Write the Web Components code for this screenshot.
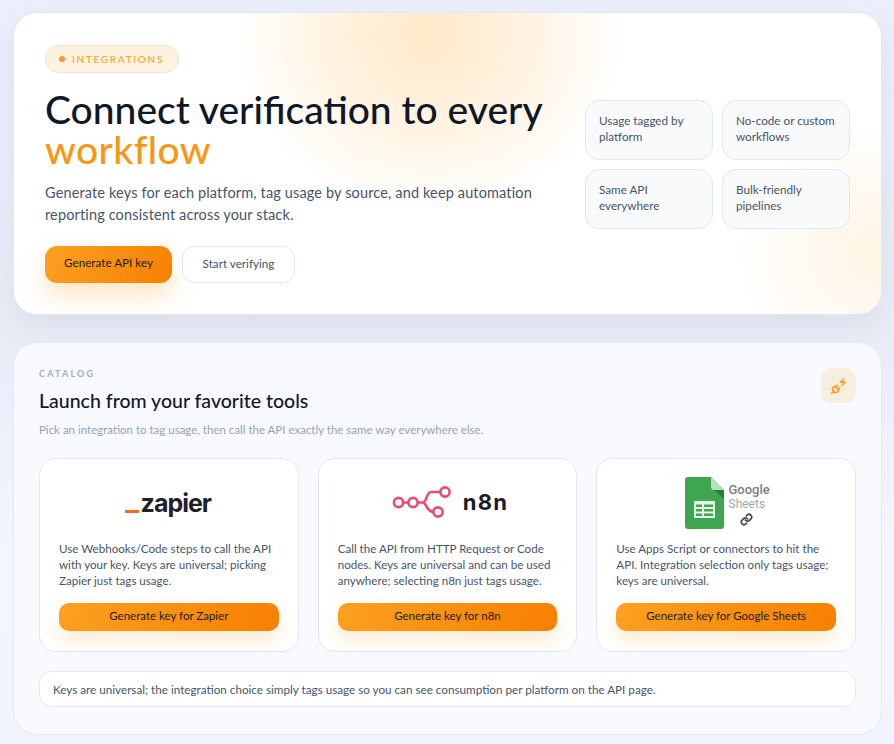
<!DOCTYPE html>
<html>
<head>
<meta charset="utf-8">
<title>Integrations</title>
<style>
    html, body { margin: 0; padding: 0; }
    body {
        width: 894px;
        height: 744px;
        overflow: hidden;
        font-family: "Lato", "Noto Sans", sans-serif;
        color: #0f172a;
        background: linear-gradient(180deg, #eaeffb 0%, #e8ecf7 45%, #f3f6fe 75%, #f1f4fe 100%);
    }
    main {
        display: flex;
        flex-direction: column;
        gap: 27px;
        padding: 12px 12px 0 13px;
    }
</style>
</head>
<body>
<main>
    <int-hero>
        <int-chip slot="chips">Usage tagged by platform</int-chip>
        <int-chip slot="chips">No-code or custom workflows</int-chip>
        <int-chip slot="chips">Same API everywhere</int-chip>
        <int-chip slot="chips">Bulk-friendly pipelines</int-chip>
    </int-hero>
    <int-catalog>
        <tool-card label="Generate key for Zapier">
            <zapier-logo slot="logo"></zapier-logo>
            Use Webhooks/Code steps to call the API with your key. Keys are universal; picking Zapier just tags usage.
        </tool-card>
        <tool-card label="Generate key for n8n">
            <n8n-logo slot="logo"></n8n-logo>
            Call the API from HTTP Request or Code nodes. Keys are universal and can be used anywhere; selecting n8n just tags usage.
        </tool-card>
        <tool-card label="Generate key for Google Sheets">
            <sheets-logo slot="logo"></sheets-logo>
            Use Apps Script or connectors to hit the API. Integration selection only tags usage; keys are universal.
        </tool-card>
    </int-catalog>
</main>

<script>
class IntHero extends HTMLElement {
    constructor() {
        super();
        this.attachShadow({ mode: 'open' });
        this.shadowRoot.innerHTML = `
            <style>
                :host {
                    display: grid;
                    grid-template-columns: 1fr 265px;
                    column-gap: 24px;
                    align-items: center;
                    height: 303px;
                    box-sizing: border-box;
                    padding: 32px 31px;
                    background:
                        radial-gradient(ellipse 195px 180px at 415px 20px, rgba(255, 200, 120, .4), rgba(255, 200, 120, .2) 55%, rgba(255, 200, 120, 0) 100%),
                        radial-gradient(ellipse 150px 130px at 869px 240px, rgba(255, 205, 130, .22), rgba(255, 205, 130, 0) 100%),
                        #fff;
                    border: 1px solid #e2e8f0;
                    border-radius: 24px;
                    box-shadow: 0 12px 32px rgba(15, 23, 42, .06);
                }
                .pill {
                    display: inline-flex;
                    align-items: center;
                    gap: 7px;
                    height: 28px;
                    box-sizing: border-box;
                    padding: 0 14px 0 13px;
                    background: #fdf1e0;
                    border: 1px solid #f1e4d2;
                    border-radius: 14px;
                    color: #fba42c;
                    font-size: 10px;
                    font-weight: 500;
                    letter-spacing: 1.7px;
                }
                .dot {
                    width: 6px;
                    height: 6px;
                    border-radius: 50%;
                    background: #fb9a1c;
                }
                h1 {
                    margin: 16px 0 0;
                    font-size: 39px;
                    line-height: 40px;
                    font-weight: 500;
                    color: #0f172a;
                }
                h1 span { color: #fb9612; display: block; letter-spacing: .4px; }
                p {
                    margin: 13px 0 0;
                    font-size: 14.5px;
                    line-height: 22px;
                    letter-spacing: .14px;
                    color: #475569;
                }
                .actions {
                    display: flex;
                    gap: 10px;
                    margin-top: 20px;
                }
                .primary, .ghost {
                    display: flex;
                    align-items: center;
                    justify-content: center;
                    height: 37px;
                    box-sizing: border-box;
                    border-radius: 12px;
                    font-size: 11.7px;
                }
                .primary {
                    width: 127px;
                    padding-bottom: 5px;
                    background: linear-gradient(120deg, #fca122, #f77f00);
                    color: #1a1a1a;
                    box-shadow: 0 12px 24px rgba(251, 154, 28, .26);
                }
                .ghost {
                    width: 113px;
                    padding-bottom: 3px;
                    background: #fff;
                    border: 1px solid #e2e8f0;
                    color: #475569;
                }
                .chips {
                    display: grid;
                    grid-template-columns: 1fr 1fr;
                    gap: 9px;
                }
            </style>
            <div>
                <div class="pill"><span class="dot"></span>INTEGRATIONS</div>
                <h1>Connect verification to every <span>workflow</span></h1>
                <p>Generate keys for each platform, tag usage by source, and keep automation reporting consistent across your stack.</p>
                <div class="actions">
                    <div class="primary">Generate API key</div>
                    <div class="ghost">Start verifying</div>
                </div>
            </div>
            <div class="chips"><slot name="chips"></slot></div>
        `;
    }
}

class IntChip extends HTMLElement {
    constructor() {
        super();
        this.attachShadow({ mode: 'open' });
        this.shadowRoot.innerHTML = `
            <style>
                :host {
                    display: block;
                    box-sizing: border-box;
                    height: 60px;
                    padding: 11px 13px;
                    background: #f8fafc;
                    border: 1px solid #e2e8f0;
                    border-radius: 14px;
                    font-size: 11.7px;
                    line-height: 16px;
                    color: #475569;
                }
            </style>
            <slot></slot>
        `;
    }
}

class IntCatalog extends HTMLElement {
    constructor() {
        super();
        this.attachShadow({ mode: 'open' });
        this.shadowRoot.innerHTML = `
            <style>
                :host {
                    display: block;
                    box-sizing: border-box;
                    height: 393px;
                    padding: 24px 25px;
                    background: #f8faff;
                    border: 1px solid #e2e8f0;
                    border-radius: 24px;
                }
                header {
                    display: flex;
                    justify-content: space-between;
                    align-items: flex-start;
                }
                .eyebrow {
                    margin-top: 1px;
                    font-size: 9px;
                    line-height: 12px;
                    font-weight: 700;
                    letter-spacing: 2.2px;
                    color: #a5aebc;
                }
                h2 {
                    margin: 9px 0 0;
                    font-size: 19.5px;
                    line-height: 24px;
                    font-weight: 500;
                    color: #0f172a;
                }
                .sub {
                    margin: 9px 0 0;
                    font-size: 11.5px;
                    line-height: 16px;
                    color: #94a3b8;
                }
                .badge {
                    display: flex;
                    align-items: center;
                    justify-content: center;
                    width: 35px;
                    height: 35px;
                    margin-top: 1px;
                    background: #f8eedf;
                    border-radius: 10px;
                }
                .cards {
                    display: grid;
                    grid-template-columns: repeat(3, 1fr);
                    gap: 19px;
                    margin-top: 20px;
                }
                .note {
                    box-sizing: border-box;
                    height: 36px;
                    margin-top: 19px;
                    padding: 0 13px;
                    display: flex;
                    align-items: center;
                    background: #fff;
                    border: 1px solid #e2e8f0;
                    border-radius: 12px;
                    font-size: 11.7px;
                    color: #475569;
                }
            </style>
            <header>
                <div>
                    <div class="eyebrow">CATALOG</div>
                    <h2>Launch from your favorite tools</h2>
                    <div class="sub">Pick an integration to tag usage, then call the API exactly the same way everywhere else.</div>
                </div>
                <div class="badge">
                    <svg width="18" height="18" viewBox="0 0 24 24" fill="none" stroke="#fb9a1c" stroke-width="2" stroke-linecap="round" stroke-linejoin="round">
                        <path d="M6.3 20.3a2.4 2.4 0 0 0 3.4 0L12 18l-6-6-2.3 2.3a2.4 2.4 0 0 0 0 3.4Z"/>
                        <path d="m2 22 3-3"/>
                        <path d="M7.5 13.5 10 11"/>
                        <path d="M10.5 16.5 13 14"/>
                        <path d="m18 3-4 4h6l-4 4"/>
                    </svg>
                </div>
            </header>
            <div class="cards"><slot></slot></div>
            <div class="note">Keys are universal; the integration choice simply tags usage so you can see consumption per platform on the API page.</div>
        `;
    }
}

class ToolCard extends HTMLElement {
    constructor() {
        super();
        this.attachShadow({ mode: 'open' });
        this.shadowRoot.innerHTML = `
            <style>
                :host {
                    display: flex;
                    flex-direction: column;
                    box-sizing: border-box;
                    height: 194px;
                    padding: 14px 19px 20px;
                    background: #fff;
                    border: 1px solid #e2e8f0;
                    border-radius: 16px;
                }
                .logo {
                    display: flex;
                    align-items: center;
                    justify-content: center;
                    height: 58px;
                }
                .desc {
                    margin-top: 10px;
                    height: 54px;
                    font-size: 11.6px;
                    line-height: 16px;
                    color: #475569;
                }
                .btn {
                    display: flex;
                    align-items: center;
                    justify-content: center;
                    height: 28px;
                    box-sizing: border-box;
                    padding-bottom: 3px;
                    margin-top: auto;
                    border-radius: 10px;
                    background: linear-gradient(120deg, #fca122, #f77f00);
                    box-shadow: 0 10px 20px rgba(251, 154, 28, .2);
                    font-size: 11.5px;
                    color: #1a1a1a;
                }
            </style>
            <div class="logo"><slot name="logo"></slot></div>
            <div class="desc"><slot></slot></div>
            <div class="btn"></div>
        `;
    }

    connectedCallback() {
        this.shadowRoot.querySelector('.btn').textContent = this.getAttribute('label');
    }
}

class ZapierLogo extends HTMLElement {
    constructor() {
        super();
        this.attachShadow({ mode: 'open' });
        this.shadowRoot.innerHTML = `
            <style>
                :host {
                    display: flex;
                    align-items: flex-end;
                    gap: 2px;
                    margin: 2px 2px 0 0;
                }
                .bar {
                    width: 14px;
                    height: 3.5px;
                    margin-bottom: 4px;
                    background: #ff6a1a;
                }
                .word {
                    font-family: "Inter", sans-serif;
                    font-size: 25px;
                    line-height: 28px;
                    font-weight: 700;
                    letter-spacing: -1px;
                    color: #1f1f2e;
                }
            </style>
            <span class="bar"></span><span class="word">zapier</span>
        `;
    }
}

class N8nLogo extends HTMLElement {
    constructor() {
        super();
        this.attachShadow({ mode: 'open' });
        this.shadowRoot.innerHTML = `
            <style>
                :host {
                    display: flex;
                    align-items: center;
                    gap: 11px;
                    margin-left: 5px;
                }
                .word {
                    font-family: "Inter", sans-serif;
                    font-size: 22px;
                    font-weight: 700;
                    letter-spacing: 1.2px;
                    color: #1b1b2b;
                }
            </style>
            <svg width="60" height="34" viewBox="0 0 60 34" fill="none" stroke="#ea4b71" stroke-width="2.6">
                <circle cx="6.5" cy="17.5" r="4.6"/>
                <circle cx="21" cy="17.5" r="4.6"/>
                <circle cx="53" cy="7" r="4.6"/>
                <circle cx="46" cy="27" r="4.6"/>
                <path d="M11 17.500h5.500M25.500 17.500h5.500c4 0 3-10.500 8-10.500h9.500M31 17.500c3.500 0 3.500 9.500 10.500 9.500"/>
            </svg>
            <span class="word">n8n</span>
        `;
    }
}

class SheetsLogo extends HTMLElement {
    constructor() {
        super();
        this.attachShadow({ mode: 'open' });
        this.shadowRoot.innerHTML = `
            <style>
                :host {
                    display: flex;
                    align-items: flex-start;
                    gap: 5px;
                    margin: 2px 0 0 2px;
                }
                .side {
                    display: flex;
                    flex-direction: column;
                    font-family: "Roboto", sans-serif;
                    padding-top: 6px;
                }
                .g { font-size: 13px; line-height: 14px; font-weight: 500; color: #808080; }
                .s { font-size: 12px; line-height: 15px; color: #a6a6a6; }
                .side svg { margin: 1px 0 0 11px; }
            </style>
            <svg width="39" height="52" viewBox="0 0 39 52">
                <path d="M3 0h23l13 13v36a3 3 0 0 1-3 3H3a3 3 0 0 1-3-3V3a3 3 0 0 1 3-3z" fill="#3ea551"/>
                <path d="M26 0l13 13H29a3 3 0 0 1-3-3z" fill="#b7dfc0"/>
                <path d="M29 13h10v9z" fill="#2b7c3c"/>
                <path d="M9 24h21v17H9z" fill="#e8f3ea"/>
                <path d="M11 27.500h6v2.500h-6zM19 27.500h9v2.500h-9zM11 32h6v2.500h-6zM19 32h9v2.500h-9zM11 36.500h6v2.500h-6zM19 36.500h9v2.500h-9z" fill="#3ea551"/>
            </svg>
            <div class="side">
                <span class="g">Google</span>
                <span class="s">Sheets</span>
                <svg width="13" height="13" viewBox="0 0 24 24" fill="none" stroke="#4a4a55" stroke-width="3.200" stroke-linecap="round">
                    <path d="M10 13a5 5 0 0 0 7.500.5l3-3a5 5 0 0 0-7-7l-1.700 1.700"/>
                    <path d="M14 11a5 5 0 0 0-7.500-.5l-3 3a5 5 0 0 0 7 7l1.700-1.700"/>
                </svg>
            </div>
        `;
    }
}

customElements.define('int-hero', IntHero);
customElements.define('int-chip', IntChip);
customElements.define('int-catalog', IntCatalog);
customElements.define('tool-card', ToolCard);
customElements.define('zapier-logo', ZapierLogo);
customElements.define('n8n-logo', N8nLogo);
customElements.define('sheets-logo', SheetsLogo);
</script>
</body>
</html>
